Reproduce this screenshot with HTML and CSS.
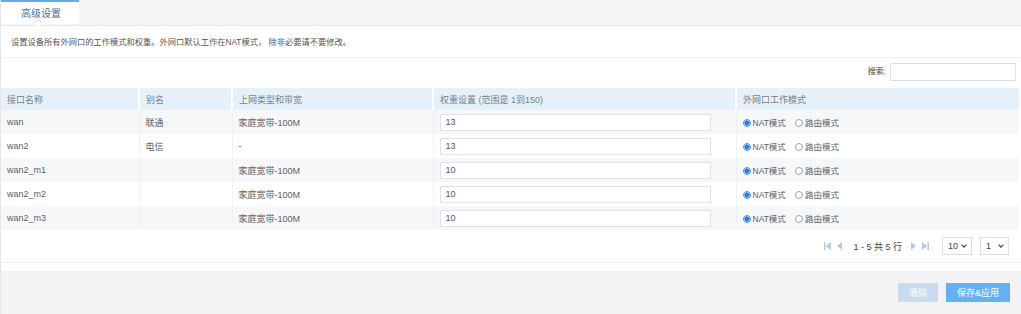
FILE: index.html
```html
<!DOCTYPE html>
<html lang="zh-CN">
<head>
  <meta charset="UTF-8">
  <title>高级设置</title>
  <link rel="stylesheet" href="styles.css">
</head>
<body>
  <div class="page">
    <!-- Tabs -->
    <div class="tabs">
      <div class="tab active">高级设置<span class="caret"></span></div>
    </div>

    <div class="panel">
      <p class="desc">设置设备所有外网口的工作模式和权重。外网口默认工作在NAT模式， 除非必要请不要修改。</p>

      <div class="search-row">
        <label>搜索:</label>
        <input type="text" class="search-input">
      </div>

      <table class="grid">
        <thead>
          <tr>
            <th class="c1">接口名称</th>
            <th class="c2">别名</th>
            <th class="c3">上网类型和带宽</th>
            <th class="c4">权重设置 (范围是 1到150)</th>
            <th class="c5">外网口工作模式</th>
          </tr>
        </thead>
        <tbody>
          <tr class="odd">
            <td>wan</td><td>联通</td><td>家庭宽带-100M</td>
            <td><input type="text" class="weight" value="13"></td>
            <td><span class="radio on"></span><span class="opt">NAT模式</span><span class="radio"></span><span class="opt">路由模式</span></td>
          </tr>
          <tr>
            <td>wan2</td><td>电信</td><td>-</td>
            <td><input type="text" class="weight" value="13"></td>
            <td><span class="radio on"></span><span class="opt">NAT模式</span><span class="radio"></span><span class="opt">路由模式</span></td>
          </tr>
          <tr class="odd">
            <td>wan2_m1</td><td></td><td>家庭宽带-100M</td>
            <td><input type="text" class="weight" value="10"></td>
            <td><span class="radio on"></span><span class="opt">NAT模式</span><span class="radio"></span><span class="opt">路由模式</span></td>
          </tr>
          <tr>
            <td>wan2_m2</td><td></td><td>家庭宽带-100M</td>
            <td><input type="text" class="weight" value="10"></td>
            <td><span class="radio on"></span><span class="opt">NAT模式</span><span class="radio"></span><span class="opt">路由模式</span></td>
          </tr>
          <tr class="odd">
            <td>wan2_m3</td><td></td><td>家庭宽带-100M</td>
            <td><input type="text" class="weight" value="10"></td>
            <td><span class="radio on"></span><span class="opt">NAT模式</span><span class="radio"></span><span class="opt">路由模式</span></td>
          </tr>
        </tbody>
      </table>

      <div class="pager">
        <svg class="pg" width="7" height="8" viewBox="0 0 7 8"><rect x="0" y="0" width="1.5" height="8"/><path d="M7 0 L1.5 4 L7 8 Z"/></svg>
        <svg class="pg" width="5" height="8" viewBox="0 0 5 8"><path d="M5 0 L0 4 L5 8 Z"/></svg>
        <span class="pg-text">1 - 5 共 5 行</span>
        <svg class="pg" width="5" height="8" viewBox="0 0 5 8"><path d="M0 0 L5 4 L0 8 Z"/></svg>
        <svg class="pg" width="7" height="8" viewBox="0 0 7 8"><path d="M0 0 L5.5 4 L0 8 Z"/><rect x="5.5" y="0" width="1.5" height="8"/></svg>
        <div class="sel w30">10<span class="chev"></span></div>
        <div class="sel w29">1<span class="chev"></span></div>
      </div>
    </div>

    <div class="footer">
      <button class="btn btn-clear">清除</button>
      <button class="btn btn-save">保存&amp;应用</button>
    </div>
  </div>
</body>
</html>
```

FILE: styles.css
```css
body {
  margin: 0;
  font-family: "Liberation Sans", "Noto Sans CJK SC", sans-serif;
  font-size: 9px;
  color: #555;
  background: #fff;
}
.page {
  width: 1021px;
  height: 314px;
  border-left: 1px solid #e4e6ea;
  box-sizing: border-box;
  display: flex;
  flex-direction: column;
}
.tabs {
  height: 25px;
  background: #f4f5f7;
  border-bottom: 1px solid #e6e8eb;
  display: flex;
}
.tab {
  position: relative;
  width: 78px;
  height: 24px;
  box-sizing: border-box;
  border-top: 2px solid #6aa8e4;
  background: #fff;
  color: #4c6f9c;
  font-size: 10px;
  display: flex;
  align-items: center;
  justify-content: center;
  padding: 0 0 1px 2px;
}
.caret {
  position: absolute;
  left: 34px;
  bottom: -2px;
  width: 5px;
  height: 5px;
  border-left: 1px solid #dfe2e6;
  border-top: 1px solid #dfe2e6;
  background: #fff;
  transform: rotate(45deg);
}
.panel {
  background: #fff;
  flex: none;
}
.desc {
  margin: 0;
  padding: 11px 10px 0;
  height: 20px;
  line-height: 12px;
  font-size: 8.25px;
  border-bottom: 1px solid #f1f2f4;
}
.search-row {
  display: flex;
  justify-content: flex-end;
  align-items: flex-start;
  gap: 4px;
  padding: 5px 5px 0 0;
  height: 25px;
}
.search-row label {
  font-size: 8px;
  color: #444;
  line-height: 18px;
}
.search-input {
  width: 126px;
  height: 18px;
  box-sizing: border-box;
  border: 1px solid #dcdfe3;
  margin: 0;
}
.grid {
  width: 1018px;
  border-collapse: collapse;
  table-layout: fixed;
}
.grid th {
  height: 22px;
  background: #e5f1fa;
  color: #7a7f86;
  font-weight: normal;
  text-align: left;
  padding: 0 0 0 6px;
  border-right: 2px solid #fff;
}
.grid th.c5 { border-right: none; }
.c1 { width: 131px; }
.c2 { width: 85px; }
.c3 { width: 193px; }
.c4 { width: 295px; }
.grid td {
  height: 24px;
  padding: 0 0 0 6px;
  border-right: 1px solid #f0f1f3;
  color: #5e5e5e;
  white-space: nowrap;
}
.grid td:last-child { border-right: none; }
.grid tr.odd td { background: #f6f7f9; }
.weight {
  width: 271px;
  height: 17px;
  box-sizing: border-box;
  border: 1px solid #dfe2e6;
  margin: 0;
  padding: 0 0 0 5px;
  font-family: "Liberation Sans", sans-serif;
  font-size: 9px;
  color: #555;
  vertical-align: middle;
}
.radio {
  display: inline-block;
  width: 8px;
  height: 8px;
  border: 1px solid #9aa3ad;
  border-radius: 50%;
  box-sizing: border-box;
  vertical-align: -1px;
  margin: 0 2px 0 9px;
  background: #fff;
}
.radio:first-child { margin-left: 0; }
.radio.on {
  border-color: #4a90d9;
  background: radial-gradient(circle, #2f80d8 0 2.4px, #fff 2.8px);
}
.opt {
  font-size: 8.5px;
}
.pager {
  height: 32px;
  display: flex;
  align-items: center;
  justify-content: flex-end;
  padding-right: 12px;
  border-bottom: 1px solid #eef0f2;
}
.pg {
  fill: #b7c9de;
  margin: 0 3px;
}
.pg-text {
  margin: 0 6px 0 8px;
  color: #444;
  font-size: 9px;
}
.sel {
  height: 18px;
  box-sizing: border-box;
  border: 1px solid #dcdfe3;
  display: flex;
  align-items: center;
  padding-left: 5px;
  position: relative;
  color: #444;
  margin-left: 10px;
}
.sel + .sel { margin-left: 8px; }
.w30 { width: 30px; }
.w29 { width: 29px; }
.chev {
  position: absolute;
  right: 5px;
  top: 5px;
  width: 3px;
  height: 3px;
  border-right: 1px solid #333;
  border-bottom: 1px solid #333;
  transform: rotate(45deg);
}
.footer {
  flex: 1;
  margin-top: 8px;
  background: #f3f3f5;
  display: flex;
  justify-content: flex-end;
  align-items: flex-start;
  gap: 8px;
  padding: 12px 11px 0 0;
}
.btn {
  height: 19px;
  border: none;
  color: #fff;
  font-family: "Liberation Sans", "Noto Sans CJK SC", sans-serif;
  font-size: 9px;
  padding: 0;
}
.btn-clear {
  width: 40px;
  background: #c9dcef;
}
.btn-save {
  width: 64px;
  background: #64b1f1;
}
```
